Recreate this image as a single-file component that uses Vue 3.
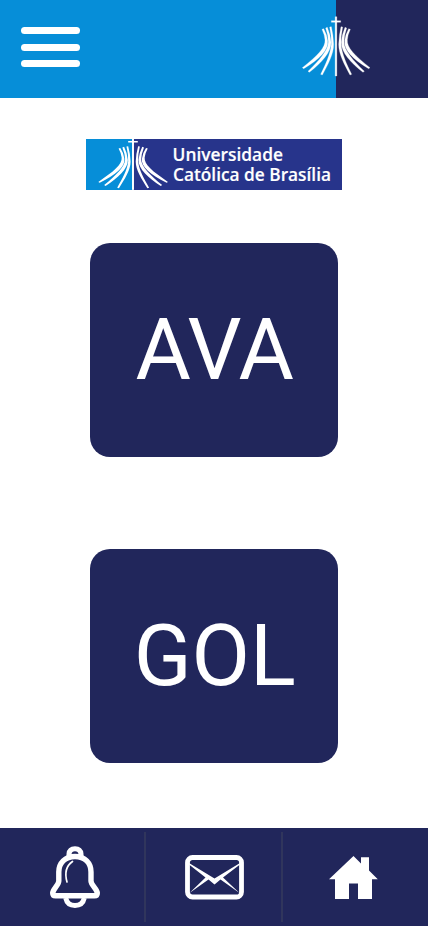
<script setup>
const cards = ['AVA', 'GOL']
</script>

<template>
  <div class="screen">
    <svg class="defs" width="0" height="0" aria-hidden="true">
      <defs>
        <g id="rays">
          <path d="M96 73Q104 90 105 104C107 128 82 152 37 188L41 191C88 163 116 135 113 108Q111 88 101 71Z" />
          <path d="M107 69Q115 92 115 110C116 135 86 168 54 199L58 202C94 174 124 142 123 112Q121 88 112 67Z" />
          <path d="M119 66Q125 95 124 118C121 148 107 178 92 208L97 210C114 178 131 148 131 118Q130 90 124 65Z" />
        </g>
        <symbol id="cathedral" viewBox="36 33 207 183" preserveAspectRatio="none">
          <use href="#rays" />
          <use href="#rays" transform="translate(277 0) scale(-1 1)" />
          <path d="M135.500 35h5v178h-5zM124 47h28v5h-28z" />
        </symbol>
      </defs>
    </svg>

    <header class="top">
      <button class="menu" aria-label="Menu"><i></i><i></i><i></i></button>
      <svg class="mark" width="69" height="61"><use href="#cathedral" width="69" height="61" /></svg>
    </header>

    <main class="content">
      <svg class="banner" width="256" height="51" viewBox="0 0 256 51">
        <path fill="#27348b" d="M0 0h256v51H0z" />
        <path fill="#068ed8" d="M0 0h47v51H0z" />
        <use class="banner-mark" href="#cathedral" x="12" y="-2" width="71" height="53" />
        <path fill="#fff" d="M46.200 0h1.600v51h-1.600z" />
        <text x="86.500" y="22.200" textLength="110.500" lengthAdjust="spacingAndGlyphs">Universidade</text>
        <text x="87" y="42.200" textLength="158" lengthAdjust="spacingAndGlyphs">Católica de Brasília</text>
      </svg>
      <div class="cards">
        <button v-for="name in cards" :key="name" class="card">{{ name }}</button>
      </div>
    </main>

    <nav class="bottom">
      <a class="tab bell">
        <svg width="52" height="64" viewBox="0 0 52 64" fill="none" stroke="#fff">
          <path stroke-width="5" d="M20 11V9Q20.500 3.700 26 3.700Q31.500 3.700 32 9V11" />
          <path stroke-width="5.400" stroke-linejoin="round" d="M26 11.500C16 11.500 9.800 18 9.800 27V36C9.800 40 4 44 3.700 48Q3.700 50.800 6.500 50.800H45.500Q48.300 50.800 48.300 48C48 44 42 40 42 36V27C42 18 36 11.500 26 11.500Z" />
          <path stroke-width="5" d="M16.700 53C17.700 57.500 21 60.500 26 60.500S34.300 57.500 35.300 53" />
          <path stroke-width="1.700" stroke-linecap="round" d="M23.500 16.500C17 21 15.500 28 18 37" />
        </svg>
      </a>
      <a class="tab mail">
        <svg width="60" height="46" viewBox="0 0 60 46">
          <rect x="2.500" y="2.500" width="54" height="39.500" rx="5" fill="none" stroke="#fff" stroke-width="4.800" />
          <path fill="#fff" d="M4 8L29.500 23.500L55 8V9.500L38 22.500L54.500 38L35.500 24.500L29.500 29.500L23.500 24.500L4.500 38L20.500 22.500L4 9.500Z" />
        </svg>
      </a>
      <a class="tab home">
        <svg width="50" height="44" viewBox="0 0 50 44">
          <path fill="#fff" d="M24.500 0L32 7.500V1.300H40V14.500L48.800 23.200H43V43H29V27.500H20V43H6V23.200H0Z" />
        </svg>
      </a>
    </nav>
  </div>
</template>

<style>
body { margin: 0; background: #fff; }
</style>

<style scoped>
.screen { width: 428px; height: 926px; display: flex; flex-direction: column; background: #fff; overflow: hidden; font-family: Roboto, sans-serif; }
.defs { position: absolute; }
button { border: 0; padding: 0; margin: 0; font: inherit; }
.top { height: 98px; flex: none; box-sizing: border-box; padding: 16px 57px 0 21px; display: flex; justify-content: space-between; align-items: flex-start; background: linear-gradient(90deg, #068ed8 336px, #21265b 336px); }
.menu { display: flex; flex-direction: column; gap: 9.500px; margin-top: 11px; background: none; }
.menu i { width: 59px; height: 7px; border-radius: 3.500px; background: #fff; }
.mark { fill: #fff; stroke: #fff; stroke-width: .8px; display: block; }
.content { flex: 1; display: flex; flex-direction: column; align-items: center; padding-top: 41px; }
.banner { display: block; overflow: hidden; }
.banner-mark { fill: #fff; }
.banner text { font: 600 17.600px "Open Sans", sans-serif; fill: #fff; stroke: #fff; stroke-width: .15px; }
.cards { display: flex; flex-direction: column; gap: 92px; margin-top: 53px; }
.card { box-sizing: border-box; width: 248px; height: 214px; padding-left: 1.500px; border-radius: 20px; background: #21265b; color: #fff; font-size: 85px; line-height: 100px; }
.bottom { height: 98px; flex: none; display: grid; grid-template-columns: 146px 137px 145px; background: #21265b; }
.tab { display: flex; align-items: flex-start; box-sizing: border-box; background: linear-gradient(#30355c, #30355c) right 4px / 2px 90px no-repeat; }
.bell { padding: 17px 0 0 49px; }
.mail { padding: 27px 0 0 39px; }
.home { padding: 28px 0 0 46px; background: none; }
.home svg, .mail svg, .bell svg { display: block; }
.home svg { margin-left: .3px; }
</style>
